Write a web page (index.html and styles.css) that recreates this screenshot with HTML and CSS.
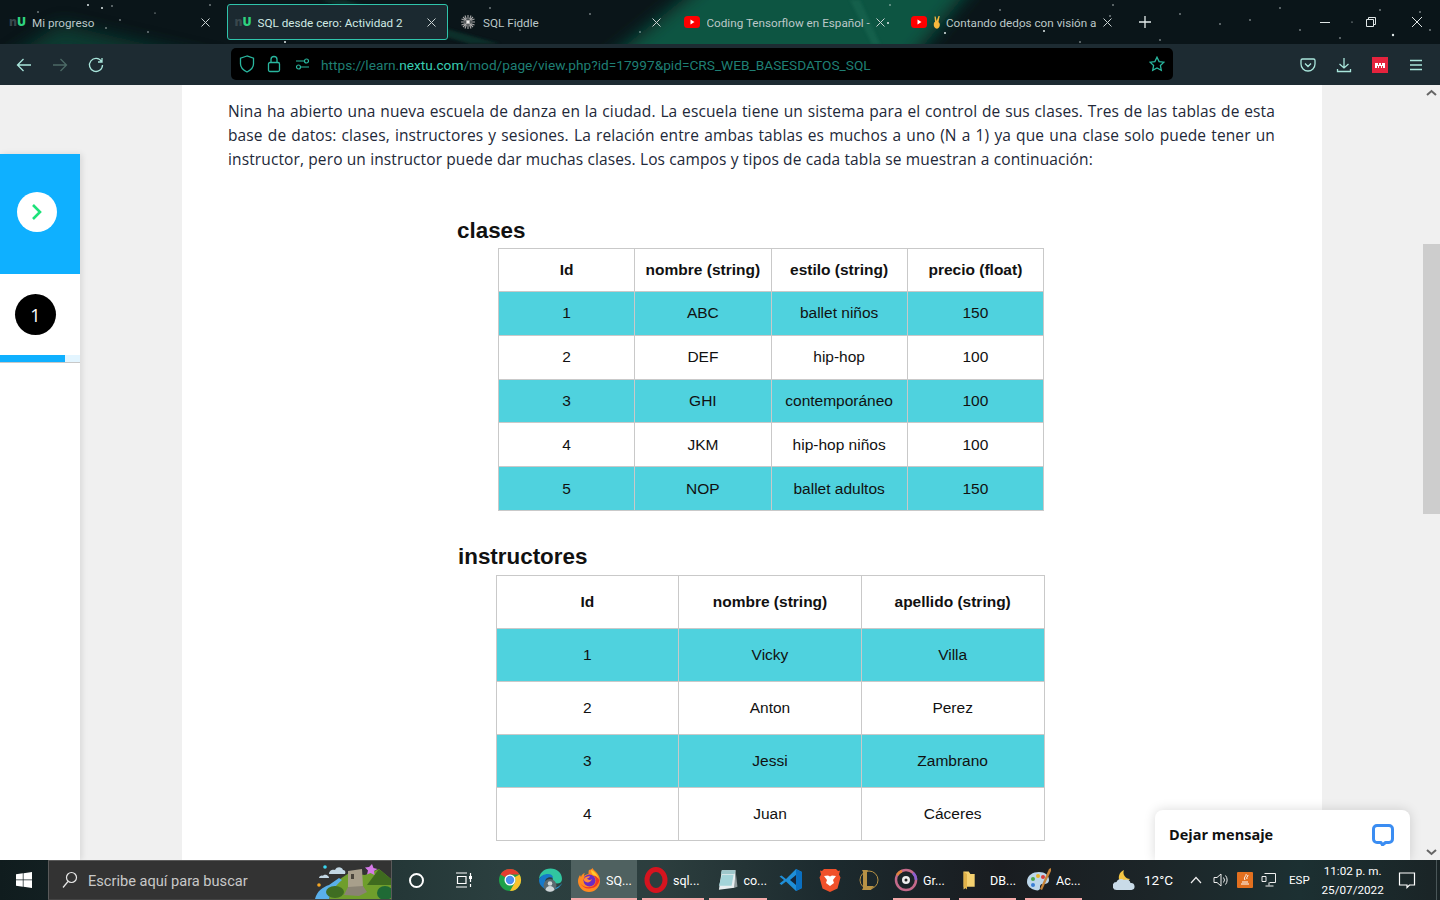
FILE: index.html
```html
<!DOCTYPE html>
<html lang="es">
<head>
  <meta charset="UTF-8" />
  <title>SQL desde cero: Actividad 2</title>
  <link rel="stylesheet" href="styles.css">
</head>
<body>

  <!-- browser tabs -->
  <div class="tabstrip">
    <svg class="space" width="1440" height="44" viewBox="0 0 1440 44">
      <defs>
        <filter id="soft" x="-30%" y="-60%" width="160%" height="220%"><feGaussianBlur stdDeviation="9"/></filter>
        <filter id="soft2"><feGaussianBlur stdDeviation="1.500"/></filter>
      </defs>
      <polygon points="720,-30 985,-30 900,74 590,74" fill="#0f5542" filter="url(#soft)"/>
      <polygon points="0,64 60,24 230,64" fill="#0e4437" opacity=".8" filter="url(#soft)"/>
      <polygon points="320,0 345,0 500,44 470,44" fill="#0f3a30" opacity=".7" filter="url(#soft2)"/>
      <polygon points="850,0 860,0 880,44 872,44" fill="#1a6a55" opacity=".5" filter="url(#soft2)"/>
      <g fill="#dfe8e8">
        <circle cx="88" cy="5" r="1"/><circle cx="102" cy="8" r="1"/><circle cx="112" cy="6" r=".7"/>
        <circle cx="38" cy="12" r=".7"/><circle cx="120" cy="20" r=".7"/><circle cx="106" cy="28" r=".7"/>
        <circle cx="148" cy="32" r=".7"/><circle cx="210" cy="5" r=".7"/><circle cx="155" cy="13" r=".6"/>
        <circle cx="285" cy="42" r="1"/><circle cx="355" cy="5" r=".7"/><circle cx="490" cy="8" r=".7"/>
        <circle cx="520" cy="30" r=".7"/><circle cx="590" cy="14" r=".7"/><circle cx="640" cy="32" r=".7"/>
        <circle cx="888" cy="23" r="1"/><circle cx="945" cy="33" r="1"/><circle cx="890" cy="5" r=".7"/>
        <circle cx="1000" cy="10" r=".7"/><circle cx="1020" cy="28" r=".7"/><circle cx="1044" cy="31" r="1"/>
        <circle cx="1110" cy="16" r=".7"/><circle cx="1160" cy="40" r=".7"/><circle cx="1180" cy="14" r=".7"/>
        <circle cx="1080" cy="42" r=".7"/><circle cx="1220" cy="24" r=".7"/><circle cx="1250" cy="20" r=".7"/>
        <circle cx="1280" cy="8" r=".7"/><circle cx="1300" cy="30" r=".7"/><circle cx="1113" cy="5" r=".7"/>
        <circle cx="1340" cy="38" r=".7"/><circle cx="1393" cy="35" r="1.2"/><circle cx="1420" cy="12" r=".7"/>
        <circle cx="1380" cy="10" r=".7"/><circle cx="1430" cy="30" r=".7"/><circle cx="1352" cy="22" r=".6"/>
      </g>
    </svg>

    <div class="tab">
      <span class="nu"><i>n</i><b>U</b></span>
      <span class="tab-title">Mi progreso</span>
      <svg class="tab-x" width="9" height="9" viewBox="0 0 9 9"><path d="M.5.5l8 8M8.500.5l-8 8"/></svg>
    </div>
    <div class="tab active">
      <span class="nu"><i>n</i><b>U</b></span>
      <span class="tab-title">SQL desde cero: Actividad 2</span>
      <svg class="tab-x" width="9" height="9" viewBox="0 0 9 9"><path d="M.5.5l8 8M8.500.5l-8 8"/></svg>
    </div>
    <div class="tab">
      <svg class="fav" width="16" height="16" viewBox="0 0 16 16" fill="none" stroke="#a8a8a8" stroke-width="1.1">
        <circle cx="8" cy="8" r="2" fill="#eee"/>
        <path d="M8 1v4M8 11v4M1 8h4M11 8h4M3 3l3 3M10 10l3 3M13 3l-3 3M6 10l-3 3M5 1.500l1.500 4M11 1.500l-1.500 4M5 14.500l1.500-4M11 14.500l-1.500-4M1.500 5l4 1.500M1.500 11l4-1.500M14.500 5l-4 1.500M14.500 11l-4-1.500"/>
      </svg>
      <span class="tab-title">SQL Fiddle</span>
      <svg class="tab-x" width="9" height="9" viewBox="0 0 9 9"><path d="M.5.5l8 8M8.500.5l-8 8"/></svg>
    </div>
    <div class="tab tab-yt">
      <svg class="fav" width="16" height="16" viewBox="0 0 16 16"><rect y="2" width="16" height="12" rx="3.500" fill="#f00"/><path d="M6.500 5.500v5l4-2.500z" fill="#fff"/></svg>
      <span class="tab-title">Coding Tensorflow en Español -</span>
      <svg class="tab-x" width="9" height="9" viewBox="0 0 9 9"><path d="M.5.5l8 8M8.500.5l-8 8"/></svg>
    </div>
    <div class="tab">
      <svg class="fav" width="16" height="16" viewBox="0 0 16 16"><rect y="2" width="16" height="12" rx="3.500" fill="#f00"/><path d="M6.500 5.500v5l4-2.500z" fill="#fff"/></svg>
      <span class="tab-emoji">
        <svg width="8" height="14" viewBox="0 0 8 14"><path d="M2 7 1.500 1.500h1.200L3.600 6 5.500 1h1.200L5.500 7c1.500 1 1.500 3 1 4.500S4.500 14 3 13.500 0.500 11 .8 9 1 7.500 2 7z" fill="#f5b83d"/></svg>
      </span>
      <span class="tab-title">Contando dedos con visión a</span>
      <svg class="tab-x" width="9" height="9" viewBox="0 0 9 9"><path d="M.5.5l8 8M8.500.5l-8 8"/></svg>
    </div>
    <svg class="newtab" width="14" height="14" viewBox="0 0 14 14" stroke="#e4ecec" stroke-width="1.300"><path d="M7 1v12M1 7h12"/></svg>

    <div class="winbtns">
      <svg width="12" height="12" viewBox="0 0 12 12" stroke="#dfe6e6" fill="none"><path d="M1 6.500h10"/></svg>
      <svg width="12" height="12" viewBox="0 0 12 12" stroke="#dfe6e6" fill="none"><path d="M1.500 3.500h7v7h-7zM3.500 3.500v-2h7v7h-2"/></svg>
      <svg width="12" height="12" viewBox="0 0 12 12" stroke="#dfe6e6" fill="none"><path d="M1 1l10 10M11 1 1 11"/></svg>
    </div>
  </div>

  <!-- toolbar -->
  <div class="toolbar">
    <div class="nav-btns">
      <svg width="16" height="16" viewBox="0 0 16 16" fill="none" stroke="#a9e6dc" stroke-width="1.300"><path d="M15 8H1.500M7.500 2 1.500 8l6 6"/></svg>
      <svg width="16" height="16" viewBox="0 0 16 16" fill="none" stroke="#4c6a66" stroke-width="1.300"><path d="M1 8h13.500M8.500 2l6 6-6 6"/></svg>
      <svg width="16" height="16" viewBox="0 0 16 16" fill="none" stroke="#a9e6dc" stroke-width="1.300"><path d="M13.500 4.500A6.500 6.500 0 1 0 14.500 8M14 1v4h-4"/></svg>
    </div>
    <div class="urlbar">
      <svg width="16" height="18" viewBox="0 0 16 18" fill="none" stroke="#29b79f" stroke-width="1.300"><path d="M8 1 1.500 3.200V9c0 4 3.500 6.500 6.500 8 3-1.500 6.500-4 6.500-8V3.200z"/></svg>
      <svg width="14" height="18" viewBox="0 0 14 18" fill="none" stroke="#29b79f" stroke-width="1.300"><rect x="1.500" y="7.500" width="11" height="9" rx="1.500"/><path d="M4 7.500V4.500a3 3 0 0 1 6 0v3"/></svg>
      <svg class="perm" width="16" height="12" viewBox="0 0 16 12" fill="none" stroke="#29b79f" stroke-width="1.200"><circle cx="11.500" cy="3" r="2"/><circle cx="3.500" cy="9" r="2"/><path d="M1 3h8M14 9H6"/></svg>
      <span class="url">https://learn.<b>nextu.com</b>/mod/page/view.php?id=17997&amp;pid=CRS_WEB_BASESDATOS_SQL</span>
      <svg class="star" width="16" height="16" viewBox="0 0 16 16" fill="none" stroke="#29b79f" stroke-width="1.300"><path d="M8 1.200l2.100 4.400 4.800.6-3.500 3.300.9 4.800L8 12l-4.300 2.300.9-4.800L1.100 6.200l4.800-.6z"/></svg>
    </div>
    <div class="tool-btns">
      <svg width="16" height="16" viewBox="0 0 16 16" fill="none" stroke="#a9e6dc" stroke-width="1.300"><path d="M2.500 2h11A1.500 1.500 0 0 1 15 3.500V7A7 7 0 0 1 1 7V3.500A1.500 1.500 0 0 1 2.500 2zM5 6.500l3 3 3-3"/></svg>
      <svg width="16" height="16" viewBox="0 0 16 16" fill="none" stroke="#a9e6dc" stroke-width="1.300"><path d="M8 1v10M3.500 7 8 11l4.500-4M1.500 12v2.500h13V12"/></svg>
      <svg width="16" height="16" viewBox="0 0 16 16"><rect width="16" height="16" fill="#e5233d"/><path d="M3 11V6h3v2h1V6h2v2h1V6h3v5h-2V9h-1v2H9V9H7v2H6V9H5v2z" fill="#fff"/></svg>
      <svg width="16" height="16" viewBox="0 0 16 16" fill="none" stroke="#a9e6dc" stroke-width="1.300"><path d="M2 3.500h12M2 8h12M2 12.500h12"/></svg>
    </div>
  </div>

  <!-- page -->
  <div class="viewport">
    <aside class="steps">
      <div class="steps-toggle">
        <span class="toggle-btn">
          <svg width="12" height="18" viewBox="0 0 12 18" fill="none" stroke="#1de27a" stroke-width="2.600"><path d="M2 2l7 7-7 7"/></svg>
        </span>
      </div>
      <div class="step">
        <span class="step-num">1</span>
      </div>
      <div class="step-progress"><div class="step-progress-fill"></div></div>
    </aside>

    <main class="page">
      <p class="intro">Nina ha abierto una nueva escuela de danza en la ciudad. La escuela tiene un sistema para el control de sus clases. Tres de las tablas de esta base de datos: clases, instructores y sesiones. La relación entre ambas tablas es muchos a uno (N a 1) ya que una clase solo puede tener un instructor, pero un instructor puede dar muchas clases. Los campos y tipos de cada tabla se muestran a continuación:</p>

      <h2 class="tbl-title tbl-title-clases">clases</h2>
      <table class="data data-clases">
        <tr><th>Id</th><th>nombre (string)</th><th>estilo (string)</th><th>precio (float)</th></tr>
        <tr class="hl"><td>1</td><td>ABC</td><td>ballet niños</td><td>150</td></tr>
        <tr><td>2</td><td>DEF</td><td>hip-hop</td><td>100</td></tr>
        <tr class="hl"><td>3</td><td>GHI</td><td>contemporáneo</td><td>100</td></tr>
        <tr><td>4</td><td>JKM</td><td>hip-hop niños</td><td>100</td></tr>
        <tr class="hl"><td>5</td><td>NOP</td><td>ballet adultos</td><td>150</td></tr>
      </table>

      <h2 class="tbl-title tbl-title-inst">instructores</h2>
      <table class="data data-inst">
        <tr><th>Id</th><th>nombre (string)</th><th>apellido (string)</th></tr>
        <tr class="hl"><td>1</td><td>Vicky</td><td>Villa</td></tr>
        <tr><td>2</td><td>Anton</td><td>Perez</td></tr>
        <tr class="hl"><td>3</td><td>Jessi</td><td>Zambrano</td></tr>
        <tr><td>4</td><td>Juan</td><td>Cáceres</td></tr>
      </table>
    </main>

    <div class="gutter"></div>

    <div class="scrollbar">
      <svg class="sb-up" width="11" height="7" viewBox="0 0 11 7" fill="none" stroke="#666" stroke-width="2"><path d="M1 6l4.500-4L10 6"/></svg>
      <div class="sb-thumb"></div>
      <svg class="sb-down" width="11" height="7" viewBox="0 0 11 7" fill="none" stroke="#666" stroke-width="2"><path d="M1 1l4.500 4L10 1"/></svg>
    </div>

    <div class="chat">
      <span>Dejar mensaje</span>
      <svg width="22" height="22" viewBox="0 0 22 22"><path d="M5 1.500h12a3.500 3.500 0 0 1 3.500 3.500v10a3.500 3.500 0 0 1-3.500 3.500h-3.500L10.500 21 9 18.500H5A3.500 3.500 0 0 1 1.500 15V5A3.500 3.500 0 0 1 5 1.500z" fill="#fff" stroke="#3b8df2" stroke-width="3" stroke-linejoin="round"/></svg>
    </div>
  </div>

  <!-- windows taskbar -->
  <footer class="taskbar">
    <div class="start">
      <svg width="16" height="16" viewBox="0 0 16 16" fill="#fff"><path d="M0 2.300 6.800 1.300v6.300H0zM7.500 1.200 16 0v7.600H7.500zM0 8.300h6.800v6.400L0 13.700zM7.500 8.300H16V16l-8.500-1.200z"/></svg>
    </div>
    <div class="search">
      <svg width="16" height="18" viewBox="0 0 16 18" fill="none" stroke="#e8e8e8" stroke-width="1.200"><circle cx="9.500" cy="6.500" r="5"/><path d="M6 10.500 1 16.500"/></svg>
      <span class="search-text">Escribe aquí para buscar</span>
      <svg class="castle" width="76" height="38" viewBox="0 0 76 38">
        <path d="M19 22 34 12 50 14 64 8 76 18V38H14z" fill="#6f9e2c"/>
        <path d="M64 8 76 18V24H52z" fill="#3f6b1f"/>
        <path d="M0 38C2 30 8 26 14 24L24 17 27 19C20 25 16 30 14 38z" fill="#5ab0ea"/>
        <ellipse cx="20" cy="31" rx="9" ry="6" fill="#3f6d22"/>
        <ellipse cx="70" cy="32" rx="8" ry="7" fill="#1f6a35"/>
        <path d="M33 10l14-2 1 18-15 1z" fill="#a89f8b"/>
        <path d="M29 34l4-8 15-1 4 6-8 4z" fill="#8a8374"/>
        <rect x="36" y="13" width="3" height="5" fill="#4b463c"/>
        <path d="M14 13c0-4 4-5 6-4 2-4 7-3 8 0 2 0 3 2 2 4z" fill="#c3d7e4"/>
        <path d="M4 17c0-2 3-3 4-2 1-2 4-1 5 0 1 .5 1 2 1 2z" fill="#c3d7e4"/>
        <circle cx="10" cy="6" r="1.800" fill="#3ad6f0"/>
        <circle cx="4" cy="24" r="1.800" fill="#f5a623"/>
        <path d="M57 3l1.500 4 4 1-3.500 2 .5 4-4-2-3.500 1.500 1-4-3-3 4-.5z" fill="#d67ae8"/>
      </svg>
    </div>
    <div class="tb-icon tb-cortana"><span class="ring"></span></div>
    <div class="tb-icon tb-taskview">
      <svg width="18" height="18" viewBox="0 0 18 18" fill="none" stroke="#fff" stroke-width="1.200"><path d="M1 2h11M1 16h11M2.500 5.500h8.500v7H2.500zM15.500 2v3M15.500 13v3M15.500 8v3"/><rect x="14" y="5" width="3" height="3" fill="#fff" stroke="none"/></svg>
    </div>
    <div class="tb-icon tb-chrome">
      <svg width="24" height="24" viewBox="0 0 24 24">
        <circle cx="12" cy="12" r="11" fill="#1fa14a"/>
        <path d="M12 1a11 11 0 0 1 9.530 5.500H12A5.500 5.500 0 0 0 7.240 9.250L2.470 6.500A11 11 0 0 1 12 1z" fill="#e53c30"/>
        <path d="M21.530 6.500A11 11 0 0 1 12 23l4.760-8.250A5.500 5.500 0 0 0 16.760 9.250z" fill="#fbc22d"/>
        <circle cx="12" cy="12" r="5.500" fill="#fff"/><circle cx="12" cy="12" r="4.200" fill="#4a8df0"/>
      </svg>
    </div>
    <div class="tb-icon tb-edge">
      <svg width="26" height="26" viewBox="0 0 26 26">
        <path d="M2 13C2 6 7 1.500 13.500 1.500 20 1.500 25 6 25 12c0 3-2 4.500-5 4.500-2 0-4-.8-4-2.500 0-3-1-6-5-6-4.500 0-9 2-9 5z" fill="#31c6a0"/>
        <path d="M2 13c1-4 5-6 9-6 3 0 5 1.500 5 4-2-1-5-1-7 1-2 3-1 7 3 10 1 .5 2 1 3 1C8 24 2 19 2 13z" fill="#1679c9"/>
        <path d="M25 16c-1 3-5 7-10 7-2 0-3-.5-4-1.500 4 1 10 0 14-5.500z" fill="#2a9ad6"/>
        <circle cx="13" cy="18.500" r="6.500" fill="#5b6a70"/><circle cx="13" cy="16.500" r="2.300" fill="#cfd6d8"/><path d="M8.500 23c.5-3 2.500-4 4.500-4s4 1 4.500 4a6.500 6.500 0 0 1-9 0z" fill="#cfd6d8"/>
      </svg>
    </div>
    <div class="tb-app tb-firefox open current">
      <svg width="24" height="24" viewBox="0 0 24 24">
        <path d="M12 2c1 0 3-1 3.500-2 .5 2 3 3 4.500 5 2.500 3 3 5.500 3 8a11 11 0 0 1-22 0c0-2.500 1-4.500 2-6l1 2c.5-2 2-3.500 4-4-1 1-1 2.500-1 3 1-1 3-2 4.500-2 0-1.500 0-3 .5-4z" fill="#ff8a1f"/>
        <path d="M22.500 12A10.500 10.500 0 0 1 3 15c3 5 12 6 15 1 1.500-3 1-6-1-8 3 0 4.500 2 5.500 4z" fill="#f0342c"/>
        <path d="M14 2c3 1 7 5 8 10-1-3-4-5-6.500-5.500C14.500 5 14 3.500 14 2z" fill="#ffcb2e"/>
        <circle cx="12.500" cy="12.500" r="6" fill="#6a2bc2"/>
        <path d="M7 11c1-2 4-3 6-2.500-1 1-1 1.500-3 2 1 1.500 3 2 5 .5-1 3-4 4-6 3-1.500-.5-2.500-2-2-3z" fill="#ff8a3d"/>
      </svg>
      <span>SQ...</span>
    </div>
    <div class="tb-app tb-opera open">
      <svg width="24" height="26" viewBox="0 0 24 26" fill="none"><ellipse cx="12" cy="13" rx="9" ry="10.500" stroke="#d5141f" stroke-width="5"/></svg>
      <span>sql...</span>
    </div>
    <div class="tb-app tb-notes open">
      <svg width="24" height="24" viewBox="0 0 24 24"><path d="M7 2h14l-1 18-16 2z" fill="#e8eef0"/><path d="M7 2h14l-1 4H6z" fill="#9ec7cb"/><path d="M7 7h12l-2 11H4z" fill="#a3d4d9"/><path d="M21 2l2 17-3 1z" fill="#8f9a9c"/></svg>
      <span>co...</span>
    </div>
    <div class="tb-icon tb-vscode">
      <svg width="24" height="24" viewBox="0 0 24 24"><path d="M17 1l6 3v16l-6 3-10-9.500-4.500 3.500L.500 15.500 5 12 .5 8.500 2.500 7.500 7 11z" fill="#1f8fd8"/><path d="M17 1l6 3v16l-6 3z" fill="#0a6fc0"/><path d="M17 7l-6 5 6 5z" fill="#15263a"/></svg>
    </div>
    <div class="tb-icon tb-brave">
      <svg width="22" height="24" viewBox="0 0 22 24"><path d="M5 1h12l2 2 2-.5-1 4 1.500 3-3 11L11 24l-7.500-3.500-3-11 1.500-3-1-4 2 .5z" fill="#f0502a"/><path d="M5 8l4-.5 2 1 2-1 4 .5-3 4 1 3-4 3-4-3 1-3z" fill="#fff"/></svg>
    </div>
    <div class="tb-icon tb-lol">
      <svg width="22" height="24" viewBox="0 0 22 24" fill="none"><circle cx="12" cy="12" r="9" stroke="#b89245" stroke-width="1"/><path d="M5 2h6l-1 2v14h7l-3 4H5l1-2V4z" fill="#b89245"/></svg>
    </div>
    <div class="tb-app tb-groove open">
      <svg width="24" height="24" viewBox="0 0 24 24" fill="none"><circle cx="12" cy="12" r="10" stroke="#c46a8a" stroke-width="2.500"/><path d="M19 5a10 10 0 0 1 3 7" stroke="#8a5fd0" stroke-width="2.500"/><path d="M3 7a10 10 0 0 1 5-4" stroke="#e2843c" stroke-width="2.500"/><circle cx="12" cy="12" r="4" fill="#eee"/><circle cx="12" cy="12" r="1.500" fill="#222"/></svg>
      <span>Gr...</span>
    </div>
    <div class="tb-app tb-folder open">
      <svg width="20" height="24" viewBox="0 0 20 24"><path d="M3 2h6l2 3h5v15H7l-4 3z" fill="#f4d06f"/><path d="M3 2l4 3v18l-4-3z" fill="#e0b24a"/></svg>
      <span>DB...</span>
    </div>
    <div class="tb-app tb-paint open">
      <svg width="26" height="26" viewBox="0 0 26 26"><path d="M1 15C1 8 7 5 13 5s10 3 10 8c0 4-4 4-6 4-3 0-3 2-3 4 0 2-2 3-5 2-4-1-8-4-8-8z" fill="#bcd6ea"/><circle cx="7" cy="12" r="2" fill="#4aa64a"/><circle cx="12" cy="9" r="2" fill="#e6b52c"/><circle cx="17" cy="10" r="2" fill="#d83c3c"/><circle cx="7" cy="18" r="2" fill="#3a7fd5"/><path d="M25 1l-2 1-9 20 2 1L25 4z" fill="#c6843a"/></svg>
      <span>Ac...</span>
    </div>

    <div class="tray">
      <svg class="tray-weather" width="24" height="22" viewBox="0 0 24 22"><path d="M11 1a6.500 6.500 0 0 0 6 9l-4 4H8A8 8 0 0 1 11 1z" fill="#f5c542"/><path d="M4 21a4 4 0 0 1-.500-8c1-3 5-4 7.500-2 3-1.500 6 0 6.500 3a3.500 3.500 0 0 1 1 7z" fill="#c9dbe8"/></svg>
      <span class="tray-temp">12°C</span>
      <svg class="tray-chev" width="12" height="8" viewBox="0 0 12 8" fill="none" stroke="#eee" stroke-width="1.200"><path d="M1 7l5-5.500L11 7"/></svg>
      <svg class="tray-vol" width="16" height="16" viewBox="0 0 16 16" fill="none" stroke="#eee" stroke-width="1"><path d="M1 5.500h3L8 2v12L4 10.500H1zM10.500 5.500a4 4 0 0 1 0 5M12.500 3.500a7 7 0 0 1 0 9"/></svg>
      <svg class="tray-java" width="16" height="16" viewBox="0 0 16 16"><rect width="16" height="16" rx="1" fill="#e2701f"/><path d="M4 12h8M5 10h6M9 2c1 2-3 3-1 6M11 3c0 2-2 2-1 4" fill="none" stroke="#fff" stroke-width="1"/></svg>
      <svg class="tray-net" width="16" height="16" viewBox="0 0 16 16" fill="none" stroke="#eee" stroke-width="1"><path d="M3.500 1.500h11v9h-6M8 10.500v3M4.500 14h8M1 4.500h4v5H1z"/></svg>
      <span class="tray-lang">ESP</span>
      <div class="clock"><span>11:02 p. m.</span><span>25/07/2022</span></div>
      <svg class="tray-note" width="18" height="18" viewBox="0 0 18 18" fill="none" stroke="#fff" stroke-width="1.200"><path d="M1.500 2h15v12h-5L9 16.500V14H1.500z"/></svg>
      <div class="show-desktop"></div>
    </div>
  </footer>

</body>
</html>
```

FILE: styles.css
```css
* { box-sizing: border-box; }
html, body { height: 100%; }
body {
  margin: 0;
  width: 1440px;
  height: 900px;
  overflow: hidden;
  display: flex;
  flex-direction: column;
  background: #fff;
  font-family: "Open Sans", sans-serif;
}

/* tabs */
.tabstrip {
  position: relative;
  height: 44px;
  flex: none;
  display: flex;
  align-items: center;
  padding-left: 1px;
  background: #0a1519;
  overflow: hidden;
}
.space { position: absolute; left: 0; top: 0; }
.tab {
  position: relative;
  width: 221px;
  height: 36px;
  margin-right: 4.5px;
  display: flex;
  align-items: center;
  padding: 0 11px 0 7px;
  color: #bcc8c8;
  font-family: Roboto, sans-serif;
  font-size: 11.7px;
  border: 1px solid transparent;
  border-radius: 3px;
  white-space: nowrap;
}
.tab.active {
  background: #1b2930;
  border-color: #2fc4ab;
  color: #cfeae4;
}
.tab-yt { left: -2px; }
.nu { width: 23px; flex: none; font-family: "Open Sans", sans-serif; font-size: 12px; line-height: 1; font-weight: 800; }
.nu i { font-style: normal; color: #39474c; }
.nu b { color: #2fd27f; }
.fav { flex: none; margin-right: 7px; }
.tab-emoji { flex: none; margin-right: 5px; margin-left: -1px; display: flex; }
.tab-title { flex: 1; overflow: hidden; padding-top: 2px; }
.tab-x { flex: none; fill: none; stroke: #c9d2d2; stroke-width: 1; }
.newtab { position: relative; margin-left: 9px; }
.winbtns {
  position: relative;
  margin-left: auto;
  display: flex;
  gap: 34px;
  padding-right: 17px;
}

/* toolbar */
.toolbar {
  height: 41px;
  flex: none;
  display: flex;
  align-items: center;
  background: #1d2b32;
}
.nav-btns {
  width: 231px;
  display: flex;
  gap: 20px;
  padding-left: 16px;
}
.urlbar {
  width: 942px;
  height: 32px;
  margin-bottom: 1px;
  background: #000;
  border-radius: 5px;
  display: flex;
  align-items: center;
  padding: 0 8px;
  gap: 12px;
}
.urlbar .perm { margin-left: 2px; margin-right: -2px; }
.url {
  flex: 1;
  font-family: Roboto, sans-serif;
  font-size: 13.7px;
  padding-top: 1px;
  color: #1f7f74;
  white-space: nowrap;
}
.url b { font-weight: 400; color: #38cdb2; }
.tool-btns {
  flex: 1;
  display: flex;
  justify-content: flex-end;
  gap: 20px;
  padding-right: 16px;
}

/* page */
.viewport {
  position: relative;
  flex: 1;
  min-height: 0;
  display: flex;
  background: #f0f0f0;
  overflow: hidden;
}
.steps {
  width: 80px;
  flex: none;
  margin-right: 102px;
  margin-top: 69px;
  background: #fff;
  box-shadow: 2px 0 6px rgba(0, 0, 0, 0.1);
}
.steps-toggle {
  height: 120px;
  background: #0fb0ff;
  display: flex;
  align-items: center;
  padding: 0 0 4px 17px;
}
.toggle-btn {
  width: 40px;
  height: 40px;
  border-radius: 50%;
  background: #fff;
  display: flex;
  align-items: center;
  justify-content: center;
}
.step {
  height: 81px;
  display: flex;
  align-items: center;
  padding-left: 15px;
}
.step-num {
  width: 41px;
  height: 41px;
  border-radius: 50%;
  background: #000;
  color: #fff;
  font-size: 18px;
  display: flex;
  align-items: center;
  justify-content: center;
}
.step-progress {
  height: 8px;
  background: #e3f5ff;
  border-bottom: 1px solid #c8c8c8;
}
.step-progress-fill { width: 65px; height: 7px; background: #0fb0ff; }

.page {
  width: 1140px;
  flex: none;
  background: #fff;
  padding: 14px 47px 0 46px;
  color: #1f2430;
  font-family: "Liberation Sans", Arial, sans-serif;
}
.intro {
  margin: 0;
  font-family: "Open Sans", sans-serif;
  font-size: 15.5px;
  letter-spacing: 0.12px;
  line-height: 24px;
  text-align: justify;
  color: #222838;
}
.tbl-title {
  margin: 0;
  color: #111;
  font-size: 22.4px;
  line-height: 26px;
  font-weight: 700;
}
.tbl-title-clases { margin-top: 47px; margin-left: 229px; }
.tbl-title-inst { margin-top: 33px; margin-left: 230px; }

.data {
  border-collapse: collapse;
  table-layout: fixed;
  color: #111;
  font-size: 15.5px;
  text-align: center;
}
.data th, .data td { border: 1px solid #c9c9c9; padding: 0; }
.data th { font-weight: 700; }
.data .hl td { background: #4fd2de; }
.data-clases { width: 546px; margin-left: 270px; margin-top: 4px; }
.data-clases th { height: 43px; }
.data-clases td { height: 43.800px; }
.data-inst { width: 549px; margin-left: 267.500px; margin-top: 5px; }
.data-inst th, .data-inst td { height: 53px; }

.gutter { flex: 1; }
.scrollbar {
  width: 17px;
  flex: none;
  position: relative;
  padding-top: 159px;
}
.sb-up { position: absolute; top: 4px; left: 3px; }
.sb-down { position: absolute; bottom: 4px; left: 3px; }
.sb-thumb { height: 270px; background: #cdcdcd; }

.chat {
  position: absolute;
  left: 1155px;
  bottom: 0;
  width: 255px;
  height: 50px;
  background: #fff;
  border-radius: 8px 8px 0 0;
  box-shadow: 0 0 12px rgba(0, 0, 0, 0.15);
  display: flex;
  align-items: center;
  justify-content: space-between;
  padding: 0 16px 1px 14px;
  color: #111;
  font-size: 14.5px;
  font-weight: 700;
}

/* taskbar */
.taskbar {
  height: 40px;
  flex: none;
  display: flex;
  align-items: stretch;
  color: #fff;
  font-family: Roboto, sans-serif;
  font-size: 12px;
  background: linear-gradient(90deg, #101c1e 0, #1e3030 300px, #2b3f3f 500px, #2c3e3e 660px, #1c2a2e 830px, #191c20 1000px, #1c2528 1150px, #1c3032 1300px, #1a2426 1440px);
  white-space: nowrap;
}
.start { width: 48px; display: flex; align-items: center; justify-content: center; }
.search {
  width: 344px;
  background: #333;
  border: 1px solid #5a5a5a;
  border-bottom-color: #444;
  display: flex;
  align-items: center;
  padding-left: 13px;
  position: relative;
  overflow: hidden;
}
.search-text { margin-left: 10px; padding-top: 1px; font-size: 14.6px; color: #c8c8c8; }
.castle { position: absolute; right: 0; top: 0; }
.tb-icon { display: flex; align-items: center; justify-content: center; }
.ring { width: 15px; height: 15px; border: 2px solid #fff; border-radius: 50%; }
.tb-cortana { width: 48px; }
.tb-taskview { width: 48px; }
.tb-chrome { width: 44px; }
.tb-edge { width: 36px; }
.tb-app {
  display: flex;
  align-items: center;
  gap: 5px;
  padding-left: 6px;
  font-size: 12.5px;
  position: relative;
}
.tb-app.open::after {
  content: "";
  position: absolute;
  left: 0;
  right: 0;
  bottom: 0;
  height: 2px;
  background: #f4a9a9;
}
.tb-app.current { background: #4f6160; }
.tb-firefox { width: 66px; margin-left: 3px; }
.tb-opera { width: 62px; margin-left: 5px; padding-left: 2px; }
.tb-notes { width: 58px; margin-left: 5px; }
.tb-vscode { width: 48px; }
.tb-brave { width: 30px; }
.tb-lol { width: 46px; }
.tb-groove { width: 57px; margin-left: 2px; padding-left: 1px; }
.tb-folder { width: 57px; margin-left: 9px; gap: 12px; padding-left: 2px; }
.tb-paint { width: 57px; margin-left: 9px; padding-left: 1px; gap: 4px; }
.tray {
  flex: 1;
  display: flex;
  align-items: center;
  padding-left: 31px;
  position: relative;
}
.tray-temp { font-size: 13.5px; margin-left: 7px; }
.tray-chev { margin-left: 17px; }
.tray-vol { margin-left: 11px; }
.tray-java { margin-left: 8px; }
.tray-net { margin-left: 8px; }
.tray-lang { margin-left: 12px; font-size: 11.5px; }
.clock {
  display: flex;
  flex-direction: column;
  align-items: center;
  margin-left: 14px;
  margin-top: 1px;
  width: 58px;
  line-height: 19px;
  font-size: 11.7px;
}
.tray-note { margin-left: 16px; }
.show-desktop {
  position: absolute;
  right: 3px;
  top: 0;
  bottom: 0;
  width: 1px;
  background: #4a5658;
}
```
